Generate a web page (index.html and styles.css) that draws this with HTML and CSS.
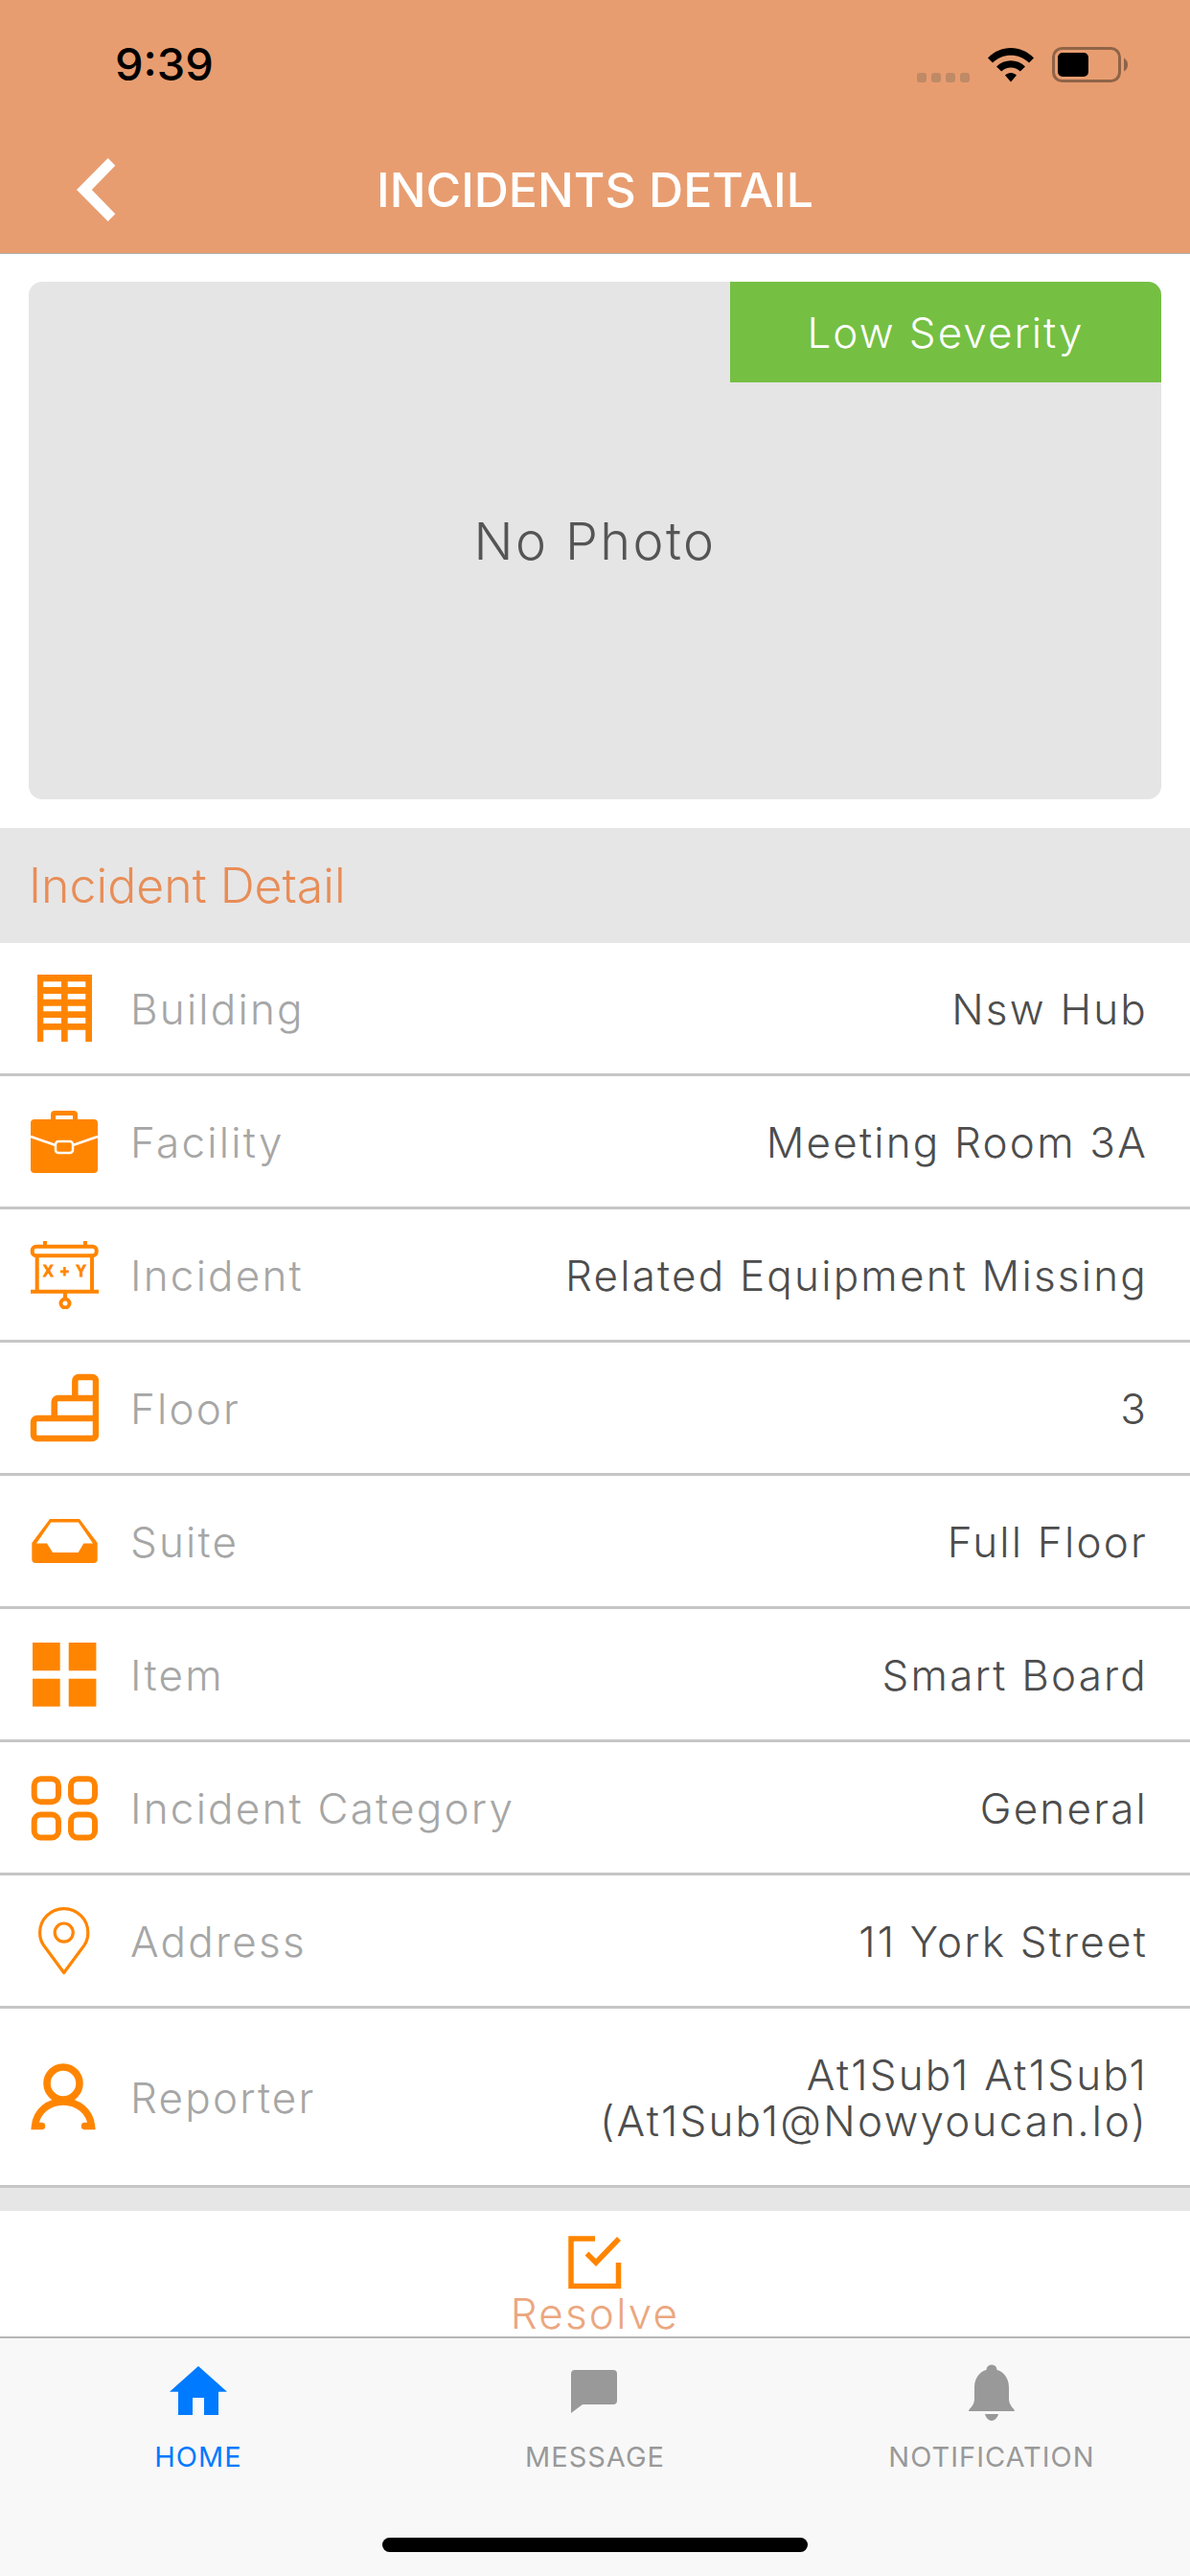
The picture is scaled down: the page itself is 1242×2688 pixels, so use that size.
FILE: index.html
```html
<!DOCTYPE html>
<html lang="en">
<head>
    <meta charset="UTF-8">
    <meta name="viewport" content="width=device-width, initial-scale=1.0">
    <title>Incidents Detail</title>
    <link rel="stylesheet" href="styles.css">
</head>
<body>
    <div class="screen">
        <header class="top-bar">
            <div class="status-bar">
                <span class="time">9:39</span>
                <div class="status-icons">
                    <svg width="55" height="10" viewBox="0 0 55 10"><g fill="#bf8a66"><rect width="10" height="10" rx="3"/><rect x="15" width="10" height="10" rx="3"/><rect x="30" width="10" height="10" rx="3"/><rect x="45" width="10" height="10" rx="3"/></g></svg>
                    <svg width="48" height="36" viewBox="0 0 48 36"><path d="M0 10.500C13 -3.500 35 -3.500 48 10.500L43 15.500C32.500 5 15.500 5 5 15.500Z M9 19.500C17 11 31 11 39 19.500L33.800 24.500C28.500 19 19.500 19 14.200 24.500Z M18 28.500C21 25 27 25 30 28.500L24 35.500Z"/></svg>
                    <svg width="80" height="37" viewBox="0 0 80 37"><rect x="1.500" y="1.500" width="69" height="34" rx="9" fill="none" stroke="#8f6448" stroke-width="3"/><rect x="6" y="6" width="32" height="25" rx="5"/><path d="M75 11.500C78 13 79 16 79 18.500C79 21 78 24 75 25.500Z" fill="#8f6448"/></svg>
                </div>
            </div>
            <div class="nav-bar">
                <svg class="back" width="44" height="68" viewBox="0 0 44 68"><path d="M34.700 1L42.300 8.700L17.800 34L42.300 59.300L34.700 67L2 34Z" fill="#fff"/></svg>
                <h1>INCIDENTS DETAIL</h1>
            </div>
        </header>

        <section class="photo-wrap">
            <div class="photo">
                <div class="severity">Low Severity</div>
                <div class="no-photo">No Photo</div>
            </div>
        </section>

        <h2 class="section-title">Incident Detail</h2>

        <ul class="details">
            <li class="row">
                <svg class="icon" viewBox="0 0 72 72"><path d="M8 1H65V71H58.300V58.700H39.700V71H33V58.700H14.300V71H8Z M14.300 8.300V14H33V8.300Z M39.700 8.300V14H58.300V8.300Z M14.300 21V26.700H33V21Z M39.700 21V26.700H58.300V21Z M14.300 33.700V39.300H33V33.700Z M39.700 33.700V39.300H58.300V33.700Z M14.300 46V52H33V46Z M39.700 46V52H58.300V46Z" fill="#ff8500" fill-rule="evenodd"/></svg>
                <span class="label">Building</span>
                <span class="value">Nsw Hub</span>
            </li>
            <li class="row">
                <svg class="icon" viewBox="0 0 72 72"><path d="M22 13V8A4 4 0 0 1 26 4H46A4 4 0 0 1 50 8V13H45V9H27V13Z" fill="#ff8500"/><rect x="1" y="13" width="70" height="56" rx="4" fill="#ff8500"/><path d="M1 31L27 40M71 31L45 40" stroke="#fff" stroke-width="2.500" fill="none"/><rect x="27" y="36" width="18" height="12" rx="3" fill="#ff8500" stroke="#fff" stroke-width="2.500"/></svg>
                <span class="label">Facility</span>
                <span class="value">Meeting Room 3A</span>
            </li>
            <li class="row">
                <svg class="icon" viewBox="0 0 72 72"><g fill="none" stroke="#ff8500" stroke-width="4"><rect x="2.700" y="6.700" width="67" height="9.500" rx="4"/><path d="M16 1V6M58 1V6M7.700 16V53.700M65 16V53.700M1 53.700H72M37 54V61"/><circle cx="37" cy="66" r="4.500"/></g><text class="icon-formula" x="14" y="38" textLength="45">X+Y</text></svg>
                <span class="label">Incident</span>
                <span class="value">Related Equipment Missing</span>
            </li>
            <li class="row">
                <svg class="icon" viewBox="0 1 72 72"><path d="M4 52A4 4 0 0 1 8 48H25.700V31A4 4 0 0 1 29.700 27H47.300V9A4 4 0 0 1 51.300 5H65A4 4 0 0 1 69 9V65A4 4 0 0 1 65 69H8A4 4 0 0 1 4 65Z M25.700 48H69 M47.300 27H69" fill="none" stroke="#ff8500" stroke-width="6.500"/></svg>
                <span class="label">Floor</span>
                <span class="value">3</span>
            </li>
            <li class="row">
                <svg class="icon" viewBox="0 0 72 72"><path d="M2.300 38L21 13H52L70.700 38V55A4 4 0 0 1 66.700 59H6.300A4 4 0 0 1 2.300 55Z M7 38.500H18L24 48H50.700L56.300 38.500H66L50.800 16.500H22.200Z" fill="#ff8500" fill-rule="evenodd"/></svg>
                <span class="label">Suite</span>
                <span class="value">Full Floor</span>
            </li>
            <li class="row">
                <svg class="icon" viewBox="0 0 72 72"><g fill="#ff8500"><rect x="3" y="3" width="28.700" height="29.300"/><rect x="40.700" y="3" width="28.700" height="29.300"/><rect x="3" y="40.700" width="28.700" height="29"/><rect x="40.700" y="40.700" width="28.700" height="29"/></g></svg>
                <span class="label">Item</span>
                <span class="value">Smart Board</span>
            </li>
            <li class="row">
                <svg class="icon" viewBox="0 0 72 72"><g fill="none" stroke="#ff8500" stroke-width="6"><rect x="4.700" y="6.300" width="25.300" height="24" rx="7"/><rect x="43" y="6.300" width="25" height="24" rx="7"/><rect x="4.700" y="43.500" width="25.300" height="24" rx="7"/><rect x="43" y="43.500" width="25" height="24" rx="7"/></g></svg>
                <span class="label">Incident Category</span>
                <span class="value">General</span>
            </li>
            <li class="row">
                <svg class="icon" viewBox="0 0 72 74"><path d="M35.700 71.500L14 42C10.500 37 9.900 33 9.900 28.500A25.800 25.800 0 0 1 61.500 28.500C61.500 33 61 37 57.500 42Z" fill="none" stroke="#ff8500" stroke-width="3.300" stroke-linejoin="round"/><circle cx="35.700" cy="28.300" r="9.800" fill="none" stroke="#ff8500" stroke-width="3.300"/></svg>
                <span class="label">Address</span>
                <span class="value">11 York Street</span>
            </li>
            <li class="row row-tall">
                <svg class="icon" viewBox="0 0 72 72"><g fill="none" stroke="#ff8500" stroke-width="7.500" stroke-linecap="round"><circle cx="35" cy="22" r="17"/><path d="M12.500 66.500H5.500C7 51 20 41 35 41C50 41 63 51 64.500 66.500H57.500"/></g></svg>
                <span class="label">Reporter</span>
                <span class="value">At1Sub1 At1Sub1<br>(At1Sub1@Nowyoucan.Io)</span>
            </li>
        </ul>

        <div class="gap-strip"></div>

        <div class="resolve">
            <svg width="60" height="60" viewBox="0 0 60 60"><path d="M30 5H5V54.500H54.500V30M21.500 20.500L31 30L55 5" fill="none" stroke="#ff8500" stroke-width="5.500"/></svg>
            <span class="resolve-text">Resolve</span>
        </div>

        <nav class="tab-bar">
            <div class="tab active">
                <svg width="64" height="60" viewBox="0 0 64 60"><path d="M2 28.700L32 2L62 28.700H53V53H38V35H26V53H11V28.700Z" fill="#007aff"/></svg>
                <span>HOME</span>
            </div>
            <div class="tab">
                <svg width="64" height="60" viewBox="0 0 64 60"><path d="M11 6H51A4 4 0 0 1 55 10V38A4 4 0 0 1 51 42H19L7 51V10A4 4 0 0 1 11 6Z" fill="#999"/></svg>
                <span>MESSAGE</span>
            </div>
            <div class="tab">
                <svg width="64" height="60" viewBox="0 0 64 60"><path d="M8 49C8 46 14 44 14 36V24C14 13 22 6.500 26.500 6A5.500 5.500 0 0 1 37.500 6C42 6.500 50 13 50 24V36C50 44 56 46 56 49Z M25 52H39C38 56 35 59 32 59C29 59 26 56 25 52Z" fill="#999"/></svg>
                <span>NOTIFICATION</span>
            </div>
        </nav>
        <div class="home-indicator"></div>
    </div>
</body>
</html>
```

FILE: styles.css
```css
* {
    box-sizing: border-box;
    margin: 0;
    padding: 0;
}

body {
    background-color: #fff;
    font-family: Inter, "Open Sans", sans-serif;
}

.screen {
    width: 1242px;
    height: 2688px;
    display: flex;
    flex-direction: column;
    overflow: hidden;
}

/* Top bar */
.top-bar {
    height: 265px;
    background-color: #e89d70;
    border-bottom: 1px solid #b4aca6;
}

.status-bar {
    height: 132px;
    display: flex;
    justify-content: space-between;
    padding: 0 64px 0 120px;
}

.time {
    font-size: 47px;
    font-weight: 500;
    line-height: 56px;
    padding-top: 39px;
    color: #000;
}

.status-icons {
    display: flex;
    align-items: flex-end;
    gap: 19px;
    height: 86px;
}

.nav-bar {
    height: 132px;
    display: grid;
    grid-template-columns: 1fr auto 1fr;
    align-items: center;
    padding-left: 78px;
    padding-right: 78px;
}

.nav-bar h1 {
    font-size: 50px;
    font-weight: 500;
    color: #fff;
}

/* Photo card */
.photo-wrap {
    height: 599px;
    padding: 29px 30px 30px;
}

.photo {
    height: 540px;
    background-color: #e5e5e5;
    border-radius: 14px;
    overflow: hidden;
    display: flex;
    flex-direction: column;
}

.severity {
    align-self: flex-end;
    width: 450px;
    height: 105px;
    background-color: #75bf43;
    color: #fff;
    font-size: 44px;
    font-weight: 300;
    letter-spacing: 2px;
    display: flex;
    align-items: center;
    justify-content: center;
}

.no-photo {
    font-size: 54px;
    font-weight: 300;
    letter-spacing: 2.400px;
    color: #555;
    text-align: center;
    margin-top: 133px;
}

/* Detail rows */
.section-title {
    height: 120px;
    background-color: #e6e6e6;
    color: #e88d57;
    font-size: 50px;
    font-weight: 300;
    line-height: 120px;
    padding-left: 30px;
}

.details {
    list-style: none;
}

.row {
    height: 139px;
    display: flex;
    align-items: center;
    padding: 0 44px 0 31px;
    border-bottom: 3px solid #c6c6c6;
    font-size: 44px;
    font-weight: 300;
    letter-spacing: 2.200px;
}

.row-tall {
    height: 187px;
}

.icon {
    width: 72px;
    height: 72px;
    flex-shrink: 0;
    margin-right: 33px;
}

.icon-formula {
    font-family: "Liberation Sans", sans-serif;
    font-size: 16px;
    font-weight: 700;
    letter-spacing: 0;
    fill: #ff8500;
    stroke: #ff8500;
    stroke-width: 0.800px;
}

.label {
    color: #a6a6a6;
    flex-shrink: 0;
    padding-top: 2px;
}

.value {
    margin-left: auto;
    padding-top: 2px;
    text-align: right;
    color: #4d4d4d;
    line-height: 48px;
}

.gap-strip {
    height: 24px;
    background-color: #e6e6e6;
}

/* Resolve action */
.resolve {
    height: 131px;
    display: flex;
    flex-direction: column;
    align-items: center;
    padding-top: 24px;
}

.resolve-text {
    font-size: 44px;
    font-weight: 300;
    letter-spacing: 2.200px;
    line-height: 46px;
    color: #eba77f;
}

/* Tab bar */
.tab-bar {
    flex: 1;
    display: flex;
    background-color: #f8f8f8;
    border-top: 2px solid #b5b5b5;
    padding-top: 27px;
}

.tab {
    flex: 1;
    display: flex;
    flex-direction: column;
    align-items: center;
    gap: 19px;
    color: #999;
    font-size: 29px;
    letter-spacing: 1px;
}

.tab.active {
    color: #007aff;
}

.home-indicator {
    position: absolute;
    left: 399px;
    top: 2648px;
    width: 444px;
    height: 15px;
    background-color: #000;
    border-radius: 8px;
}
```
